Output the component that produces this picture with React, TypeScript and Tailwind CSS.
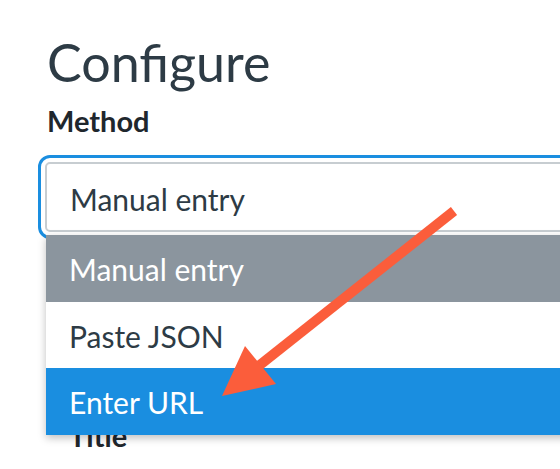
import React from 'react';

const options = [
  { label: 'Manual entry', className: 'bg-[#8b959e] text-white' },
  { label: 'Paste JSON', className: 'bg-white text-[#2d3b45]' },
  { label: 'Enter URL', className: 'bg-[#1a8ee0] text-white' },
];

export default function App() {
  return (
    <div className="relative w-[560px] h-[469px] overflow-hidden bg-white font-['Lato',sans-serif]">
      <div className="pl-[47px] pt-[31px]">
        <h1 className="text-[52px] leading-[1.2] font-normal text-[#2d3b45]">Configure</h1>

        <label className="block mt-[11px] text-[29px] leading-[1.2] font-bold text-[#1f272d]">Method</label>

        {/* Select with open menu */}
        <div className="relative mt-[23px] -ml-[2px] w-[620px]">
          <div className="h-[70px] flex items-center pt-[3px] pl-[23px] border-2 border-[#c7cdd1] rounded-[5px] bg-white outline-[3px] outline-solid outline-[#1a8ee0] outline-offset-[4px]">
            <span className="text-[30px] leading-[1.2] text-[#2d3b45]">Manual entry</span>
          </div>

          <ul className="absolute left-[1px] top-[73px] w-full z-10 shadow-[0_3px_8px_rgba(0,0,0,0.25)]">
            {options.map(opt => (
              <li
                key={opt.label}
                className={`h-[66.5px] flex items-center pt-[2px] pl-[23px] text-[30px] leading-[1.2] ${opt.className}`}
              >
                {opt.label}
              </li>
            ))}
          </ul>
        </div>

        <label className="block mt-[187px] ml-[22px] text-[29px] leading-[1.2] font-bold text-[#1f272d]">Title</label>
      </div>

      {/* annotation arrow */}
      <svg className="absolute inset-0 z-20 pointer-events-none" width="560" height="469" viewBox="0 0 560 469">
        <line x1="454" y1="211" x2="256" y2="368" stroke="#fb5d3b" strokeWidth="10" />
        <polygon points="222,396 245,346 276,384" fill="#fb5d3b" />
      </svg>
    </div>
  );
}
